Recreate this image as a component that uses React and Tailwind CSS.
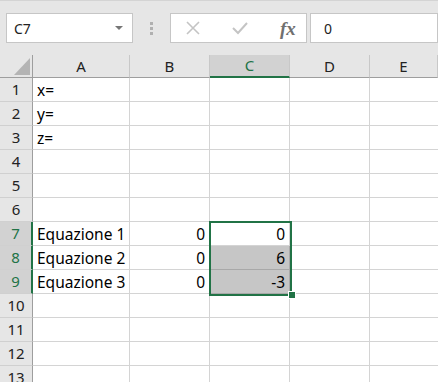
import React from 'react';

const cols = ['A', 'B', 'C', 'D', 'E'];
const rows = [
  ['x=', '', ''],
  ['y=', '', ''],
  ['z=', '', ''],
  ['', '', ''],
  ['', '', ''],
  ['', '', ''],
  ['Equazione 1', '0', '0'],
  ['Equazione 2', '0', '6'],
  ['Equazione 3', '0', '-3'],
  ['', '', ''],
  ['', '', ''],
  ['', '', ''],
  ['', '', ''],
];

const FormulaBar = () => (
  <div className="h-[55px] bg-[#e6e6e6] border-t border-[#d4d4d4] flex items-start pt-[12px] pl-[6px]">
    {/* Zone nom */}
    <div className="w-[127px] h-[30px] bg-white border border-[#c6c6c6] flex items-center justify-between pl-[7px] pr-[9px]">
      <span className="text-[14px] text-[#222]">C7</span>
      <svg width="8" height="5" viewBox="0 0 8 5"><path d="M0 0h8L4 4z" fill="#767676" /></svg>
    </div>
    <div className="w-[37px] h-[30px] flex flex-col items-center justify-center gap-[2px]">
      <span className="w-[3px] h-[3px] bg-[#b0b0b0]" />
      <span className="w-[3px] h-[3px] bg-[#b0b0b0]" />
      <span className="w-[3px] h-[3px] bg-[#b0b0b0]" />
    </div>
    {/* Boutons */}
    <div className="w-[137px] h-[30px] bg-white border border-[#c6c6c6] flex items-center">
      <svg className="ml-[14px]" width="16" height="16" viewBox="0 0 16 16">
        <path d="M2 2l12 12M14 2L2 14" stroke="#c4c4c4" strokeWidth="1.6" fill="none" />
      </svg>
      <svg className="ml-[30px]" width="18" height="14" viewBox="0 0 18 14">
        <path d="M2 7l5 5L16 2" stroke="#c4c4c4" strokeWidth="2" fill="none" />
      </svg>
      <span className="ml-[31px] text-[19px] italic font-bold text-[#707070] leading-none" style={{ fontFamily: '"Liberation Serif", serif' }}>fx</span>
    </div>
    <div className="ml-[3px] flex-1 h-[30px] bg-white border border-[#c6c6c6] flex items-center pl-[13px]">
      <span className="text-[14px] text-[#222]">0</span>
    </div>
  </div>
);

export default function App() {
  return (
    <div className="w-[438px] h-[382px] overflow-hidden bg-white relative" style={{ fontFamily: '"Noto Sans", "Open Sans", sans-serif' }}>
      <FormulaBar />
      <div className="grid grid-cols-[33px_97px_80px_80px_80px_68px] auto-rows-[24px] [grid-template-rows:23px]">
        {/* En-têtes de colonnes */}
        <div className="h-[23px] bg-[#e6e6e6] border-r border-b border-[#9e9e9e] relative">
          <svg className="absolute left-[14px] top-[3px]" width="16" height="17" viewBox="0 0 16 17"><path d="M0 17H16V0z" fill="#b4b4b4" /></svg>
        </div>
        {cols.map((c) => (
          <div
            key={c}
            className={`h-[23px] flex items-center justify-center text-[15px] border-r border-[#c8c8c8] ${c === 'C' ? 'bg-[#d2d2d2] text-[#217346] border-b-2 border-b-[#217346]' : 'bg-[#e6e6e6] text-[#222] border-b border-b-[#9e9e9e]'}`}
          >
            {c}
          </div>
        ))}
        {rows.map((r, i) => {
          const sel = i >= 6 && i <= 8;
          return (
            <React.Fragment key={i}>
              <div
                className={`h-[24px] flex items-center justify-center text-[15px] border-b border-b-[#d0d0d0] ${sel ? 'bg-[#d2d2d2] text-[#217346] border-r-2 border-r-[#217346]' : 'bg-[#e6e6e6] text-[#222] border-r border-r-[#9e9e9e]'}`}
              >
                {i + 1}
              </div>
              <div className="h-[24px] border-r border-b border-[#d4d4d4] flex items-end pl-[4px] pb-[1px] text-[15.5px] text-black leading-[20px] whitespace-nowrap">{r[0]}</div>
              <div className="h-[24px] border-r border-b border-[#d4d4d4] flex items-end justify-end pr-[4px] pb-[1px] text-[15.5px] text-black leading-[20px]">{r[1]}</div>
              <div className={`h-[24px] border-r border-b flex items-end justify-end pr-[4px] pb-[1px] text-[15.5px] text-black leading-[20px] ${i === 7 || i === 8 ? 'bg-[#c6c6c6] border-[#a8a8a8]' : 'border-[#d4d4d4]'}`}>{r[2]}</div>
              <div className="h-[24px] border-r border-b border-[#d4d4d4]" />
              <div className="h-[24px] border-b border-[#d4d4d4]" />
            </React.Fragment>
          );
        })}
      </div>
      {/* Sélection C7:C9 */}
      <div className="absolute left-[209px] top-[221px] w-[83px] h-[75px] border-2 border-[#217346] pointer-events-none" />
      <div className="absolute left-[288px] top-[291px] w-[6px] h-[6px] bg-[#217346] border border-white box-content" />
    </div>
  );
}
